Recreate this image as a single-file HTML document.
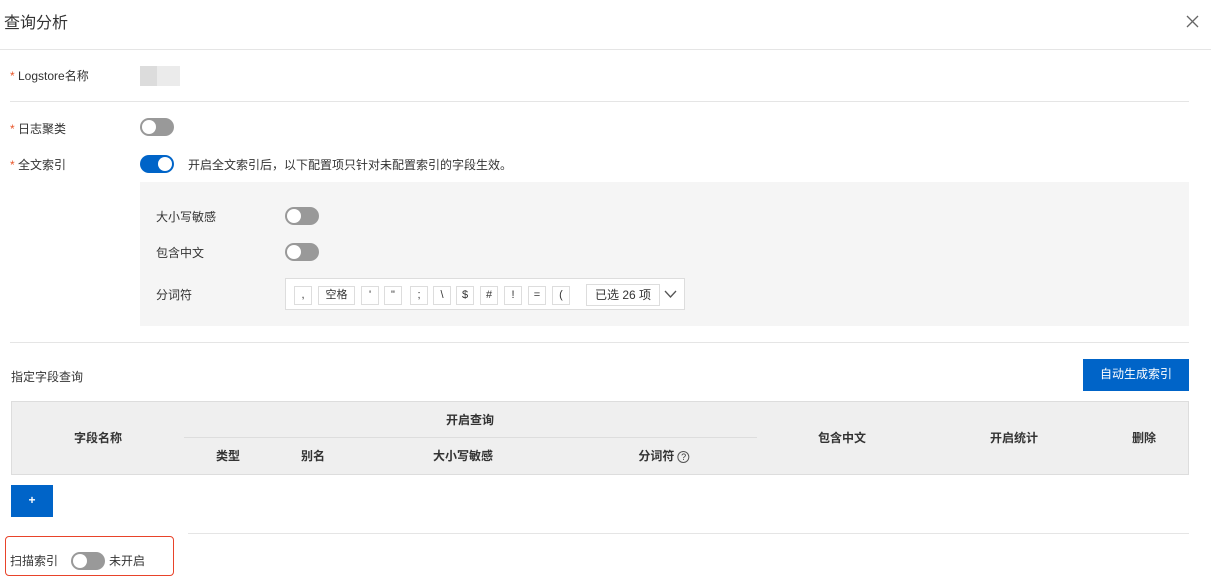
<!DOCTYPE html>
<html><head><meta charset="utf-8"><style>
*{margin:0;padding:0;box-sizing:border-box}
body{width:1211px;height:580px;background:#fff;position:relative;overflow:hidden;font-family:"Liberation Sans","Noto Sans CJK SC",sans-serif;font-size:12px;color:#333}
.a{position:absolute;white-space:nowrap}
.l{position:absolute;height:1px;background:#e5e5e5}
.st{color:#e8562a}
.tg{position:absolute;width:34px;height:18px;border-radius:9px;background:#999}
.tg::after{content:"";position:absolute;left:2px;top:2px;width:14px;height:14px;border-radius:50%;background:#fff}
.tg.on{background:#0064c8}.tg.on::after{left:18px}
.tag{position:absolute;top:286px;height:19px;border:1px solid #ddd;background:#fff;font-size:11px;text-align:center;line-height:17px}
.th{position:absolute;font-weight:bold;font-size:12px;color:#333;transform:translateX(-50%)}
</style></head><body>
<div class="a" style="left:4px;top:9px;font-size:16px;color:#333">查询分析</div>
<svg class="a" style="left:1186px;top:15px" width="13" height="13"><path d="M1 1L12 12M12 1L1 12" stroke="#666" stroke-width="1.3"/></svg>
<div class="l" style="left:0;top:49px;width:1211px"></div>
<div class="a" style="left:10px;top:67px"><span class="st">*</span> Logstore名称</div>
<div class="a" style="left:140px;top:66px;width:17px;height:20px;background:#dcdcdc"></div>
<div class="a" style="left:157px;top:66px;width:23px;height:20px;background:#ebebeb"></div>
<div class="l" style="left:10px;top:101px;width:1179px"></div>
<div class="a" style="left:10px;top:120px"><span class="st">*</span> 日志聚类</div>
<div class="tg" style="left:140px;top:118px"></div>
<div class="a" style="left:10px;top:156px"><span class="st">*</span> 全文索引</div>
<div class="tg on" style="left:140px;top:155px"></div>
<div class="a" style="left:188px;top:156px">开启全文索引后，以下配置项只针对未配置索引的字段生效。</div>
<div class="a" style="left:140px;top:182px;width:1049px;height:144px;background:#f5f5f5"></div>
<div class="a" style="left:156px;top:208px">大小写敏感</div>
<div class="tg" style="left:285px;top:207px"></div>
<div class="a" style="left:156px;top:244px">包含中文</div>
<div class="tg" style="left:285px;top:243px"></div>
<div class="a" style="left:156px;top:286px">分词符</div>
<div class="a" style="left:285px;top:278px;width:400px;height:32px;background:#fff;border:1px solid #ddd"></div>
<div class="tag" style="left:294px;width:18px">,</div>
<div class="tag" style="left:318px;width:37px">空格</div>
<div class="tag" style="left:361px;width:18px">'</div>
<div class="tag" style="left:384px;width:18px">"</div>
<div class="tag" style="left:410px;width:18px">;</div>
<div class="tag" style="left:433px;width:18px">\</div>
<div class="tag" style="left:456px;width:18px">$</div>
<div class="tag" style="left:480px;width:18px">#</div>
<div class="tag" style="left:504px;width:18px">!</div>
<div class="tag" style="left:528px;width:18px">=</div>
<div class="tag" style="left:552px;width:18px">(</div>
<div class="tag" style="left:586px;width:74px;height:22px;top:284px;font-size:12px;line-height:20px">已选 26 项</div>
<svg class="a" style="left:664px;top:290px" width="13" height="9"><path d="M1 1L6.5 7L12 1" stroke="#555" fill="none" stroke-width="1.3"/></svg>
<div class="l" style="left:10px;top:342px;width:1179px"></div>
<div class="a" style="left:11px;top:368px">指定字段查询</div>
<div class="a" style="left:1083px;top:359px;width:106px;height:32px;background:#0064c8;color:#fff;text-align:center;line-height:31px">自动生成索引</div>
<div class="a" style="left:11px;top:401px;width:1178px;height:74px;background:#efefef;border:1px solid #ddd"></div>
<div class="a" style="left:184px;top:437px;width:573px;height:1px;background:#ddd"></div>
<div class="th" style="left:98px;top:429px">字段名称</div>
<div class="th" style="left:470px;top:411px">开启查询</div>
<div class="th" style="left:228px;top:447px">类型</div>
<div class="th" style="left:313px;top:447px">别名</div>
<div class="th" style="left:463px;top:447px">大小写敏感</div>
<div class="th" style="left:664px;top:447px">分词符 <span style="font-weight:normal;display:inline-block;width:12px;height:12px;border:1px solid #555;border-radius:50%;font-size:9px;line-height:10px;text-align:center">?</span></div>
<div class="th" style="left:842px;top:429px">包含中文</div>
<div class="th" style="left:1014px;top:429px">开启统计</div>
<div class="th" style="left:1144px;top:429px">删除</div>
<div class="a" style="left:11px;top:485px;width:42px;height:32px;background:#0064c8;color:#fff;text-align:center;line-height:31px;font-weight:bold">+</div>
<div class="l" style="left:188px;top:533px;width:1001px"></div>
<div class="a" style="left:5px;top:536px;width:169px;height:40px;border:1.5px solid #e8432a;border-radius:4px"></div>
<div class="a" style="left:10px;top:552px">扫描索引</div>
<div class="tg" style="left:71px;top:552px"></div>
<div class="a" style="left:109px;top:552px">未开启</div>
</body></html>
